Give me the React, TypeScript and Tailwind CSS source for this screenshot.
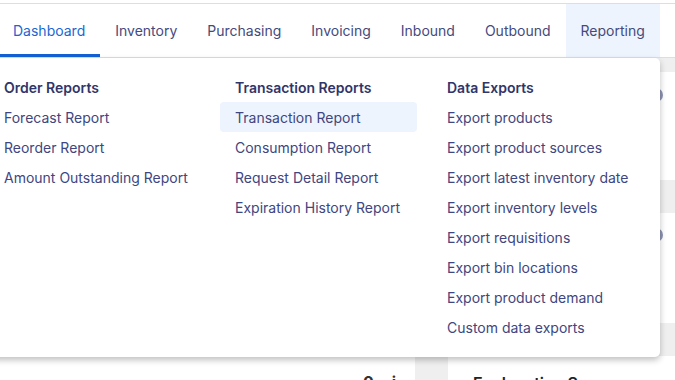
import React from "react";

const tabs = ["Dashboard", "Inventory", "Purchasing", "Invoicing", "Inbound", "Outbound", "Reporting"];

const columns = [
  {
    title: "Order Reports",
    w: "w-[216px]",
    items: ["Forecast Report", "Reorder Report", "Amount Outstanding Report"],
  },
  {
    title: "Transaction Reports",
    w: "w-[197px]",
    items: ["Transaction Report", "Consumption Report", "Request Detail Report", "Expiration History Report"],
  },
  {
    title: "Data Exports",
    w: "flex-1",
    items: [
      "Export products",
      "Export product sources",
      "Export latest inventory date",
      "Export inventory levels",
      "Export requisitions",
      "Export bin locations",
      "Export product demand",
      "Custom data exports",
    ],
  },
];

export default function App() {
  return (
    <div className="relative w-[675px] h-[380px] overflow-hidden bg-white font-['Inter','Noto_Sans',sans-serif]">
      {/* Nav */}
      <div className="mt-[3px] h-[55px] border-t border-b border-[#dedede] flex items-stretch -ml-[2px]">
        {tabs.map((t, i) => {
          const active = i === 0;
          const open = t === "Reporting";
          return (
            <div
              key={t}
              className={`relative flex items-center pb-[1px] px-[15px] text-[14px] ${
                active ? "text-[#1b66d2]" : "text-[#454a7c]"
              } ${open ? "bg-[#edf4fe]" : ""}`}
            >
              {t}
              {active && <div className="absolute left-[2px] right-0 bottom-0 h-[3px] bg-[#1461d4]" />}
            </div>
          );
        })}
      </div>

      {/* Background page */}
      <div className="flex h-[322px] bg-[#efefef]">
        <div className="w-[415px] bg-white flex flex-col justify-end items-end pr-[12px]">
          <div className="text-[16px] font-bold text-[#333] translate-y-[14px] tracking-[7px]">0 i</div>
        </div>
        <div className="ml-[33px] flex-1 flex flex-col pt-[14px] gap-[33px]">
          <div className="h-[108px] shrink-0 bg-white flex justify-end pt-[16px] pr-[12px]">
            <div className="w-[14px] h-[14px] rounded-full bg-[#8d92b3]" />
          </div>
          <div className="h-[110px] shrink-0 bg-white flex justify-end pt-[15px] pr-[12px]">
            <div className="w-[14px] h-[14px] rounded-full bg-[#8d92b3]" />
          </div>
          <div className="h-[60px] shrink-0 bg-white pl-[25px] pt-[15px]">
            <div className="text-[16px] font-semibold text-[#222]">Explanation Summary</div>
          </div>
        </div>
      </div>

      {/* Dropdown */}
      <div className="absolute top-[58px] left-[-11px] w-[671px] h-[299px] bg-white rounded-[5px] shadow-[0_3px_6px_rgba(0,0,0,0.25)] flex gap-[15px] pt-[15px]">
        {columns.map((c) => (
          <div key={c.title} className={`${c.w} flex flex-col`}>
            <div className="h-[29px] flex items-center px-[15px] text-[14px] font-semibold text-[#30356a]">
              {c.title}
            </div>
            {c.items.map((it) => (
              <div
                key={it}
                className={`h-[30px] flex items-center px-[15px] text-[14px] text-[#40467f] rounded-[4px] ${
                  it === "Transaction Report" ? "bg-[#edf4fe]" : ""
                }`}
              >
                {it}
              </div>
            ))}
          </div>
        ))}
      </div>
    </div>
  );
}
